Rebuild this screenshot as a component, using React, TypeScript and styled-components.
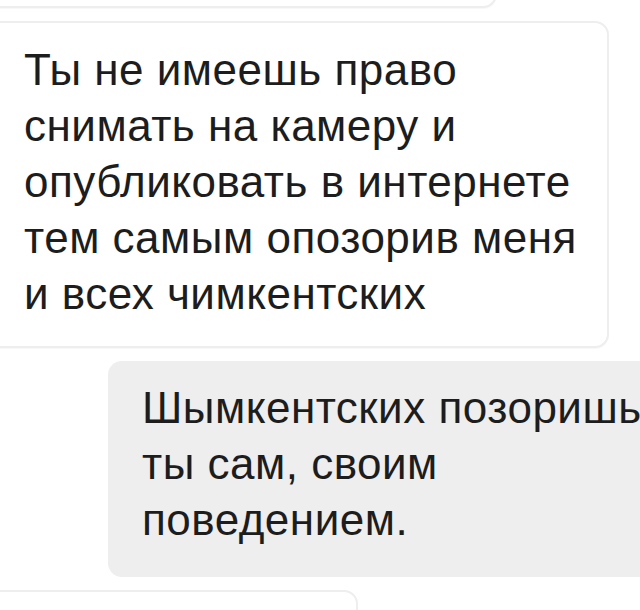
import React from 'react'
import styled, { createGlobalStyle } from 'styled-components'

const GlobalStyle = createGlobalStyle`
    html, body {
        margin: 0;
        padding: 0;
        background: #ffffff;
    }
`

const Thread = styled.div`
    width: 640px;
    height: 610px;
    overflow: hidden;
    display: flex;
    flex-direction: column;
    gap: 13px;
    background: #ffffff;
    font-family: "Liberation Sans", Arial, sans-serif;
    color: #1d1d1d;
`

// pulls the first (older) message up so only its bottom edge shows
const ScrollOffset = styled.div`
    flex-shrink: 0;
    margin-top: -105px;
`

const Bubble: any = styled.div`
    flex-shrink: 0;
    box-sizing: border-box;
    align-self: ${(p: any) => (p.$mine ? 'flex-end' : 'flex-start')};
    width: ${(p: any) => p.$width}px;
    min-height: ${(p: any) => p.$height || 0}px;
    margin-left: ${(p: any) => (p.$mine ? 0 : -20)}px;
    margin-right: ${(p: any) => (p.$mine ? -40 : 0)}px;
    background: ${(p: any) => (p.$mine ? '#eeeeee' : '#ffffff')};
    border: ${(p: any) => (p.$mine ? 'none' : '2px solid #eeeeee')};
    border-radius: 14px;
    box-shadow: ${(p: any) => (p.$mine ? 'none' : '0 1px 1px rgba(0,0,0,0.03)')};
`

const Text: any = styled.div`
    font-size: 44px;
    line-height: 56px;
    letter-spacing: 0.5px;
    white-space: pre-line;
    padding: ${(p: any) => p.$pad};
`

interface Message {
    id: number
    mine?: boolean
    width: number
    height?: number
    pad?: string
    text?: string
}

const messages: Message[] = [
    { id: 1, width: 517, height: 100 },
    {
        id: 2,
        width: 629,
        pad: '19px 20px 24px 42px',
        text: 'Ты не имеешь право\nснимать на камеру и\nопубликовать в интернете\nтем самым опозорив меня\nи всех чимкентских',
    },
    {
        id: 3,
        mine: true,
        width: 572,
        pad: '19px 10px 29px 34px',
        text: 'Шымкентских позоришь\nты сам, своим\nповедением.',
    },
    { id: 4, width: 378, height: 100 },
]

const App = () => (
    <>
        <GlobalStyle />
        <Thread>
            <ScrollOffset />
            {messages.map(m => (
                <Bubble key={m.id} $mine={m.mine} $width={m.width} $height={m.height}>
                    {m.text && <Text $pad={m.pad}>{m.text}</Text>}
                </Bubble>
            ))}
        </Thread>
    </>
)

export default App
